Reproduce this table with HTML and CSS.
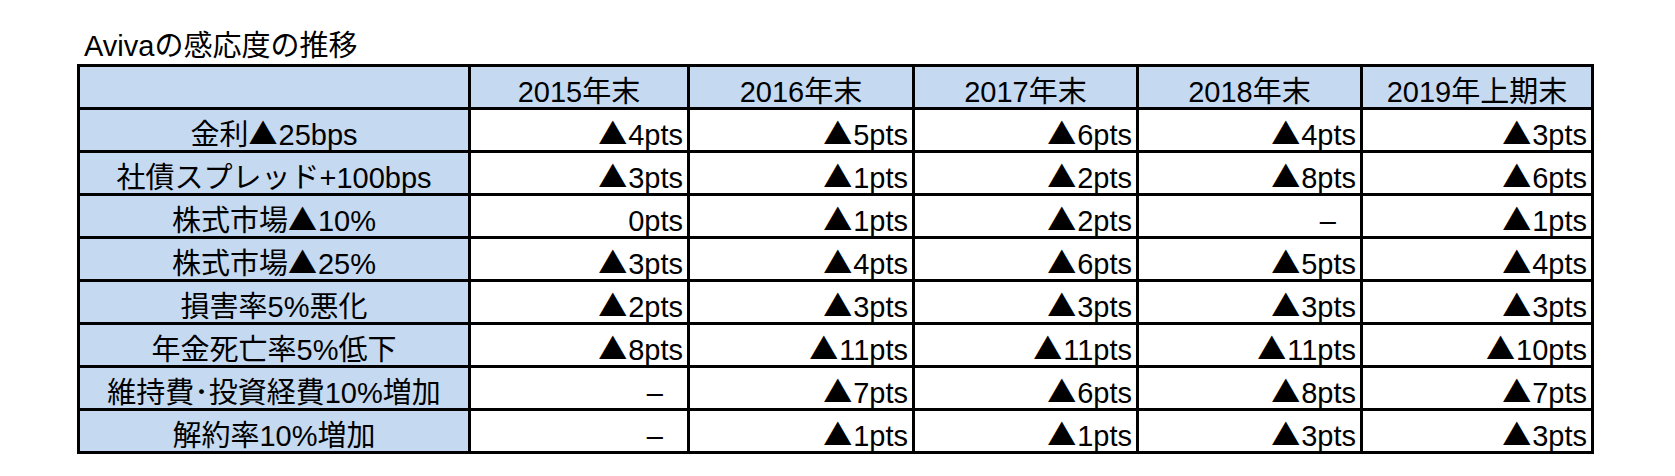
FILE: index.html
```html
<!DOCTYPE html>
<html lang="ja">
<head>
<meta charset="utf-8">
<title>Avivaの感応度の推移</title>
<link rel="stylesheet" href="styles.css">
</head>
<body>
<div class="page">
  <div class="title">Avivaの感応度の推移</div>
  <table class="grid">
    <colgroup>
      <col class="c-label">
      <col class="c-2015">
      <col class="c-2016">
      <col class="c-2017">
      <col class="c-2018">
      <col class="c-2019">
    </colgroup>
    <thead>
      <tr>
        <th class="corner"></th>
        <th>2015年末</th>
        <th>2016年末</th>
        <th>2017年末</th>
        <th>2018年末</th>
        <th>2019年上期末</th>
      </tr>
    </thead>
    <tbody>
      <tr>
        <th>金利<span class="tri">▲</span>25bps</th>
        <td><span class="tri">▲</span>4pts</td>
        <td><span class="tri">▲</span>5pts</td>
        <td><span class="tri">▲</span>6pts</td>
        <td><span class="tri">▲</span>4pts</td>
        <td><span class="tri">▲</span>3pts</td>
      </tr>
      <tr>
        <th>社債スプレッド+100bps</th>
        <td><span class="tri">▲</span>3pts</td>
        <td><span class="tri">▲</span>1pts</td>
        <td><span class="tri">▲</span>2pts</td>
        <td><span class="tri">▲</span>8pts</td>
        <td><span class="tri">▲</span>6pts</td>
      </tr>
      <tr>
        <th>株式市場<span class="tri">▲</span>10%</th>
        <td>0pts</td>
        <td><span class="tri">▲</span>1pts</td>
        <td><span class="tri">▲</span>2pts</td>
        <td class="dash">–</td>
        <td><span class="tri">▲</span>1pts</td>
      </tr>
      <tr>
        <th>株式市場<span class="tri">▲</span>25%</th>
        <td><span class="tri">▲</span>3pts</td>
        <td><span class="tri">▲</span>4pts</td>
        <td><span class="tri">▲</span>6pts</td>
        <td><span class="tri">▲</span>5pts</td>
        <td><span class="tri">▲</span>4pts</td>
      </tr>
      <tr>
        <th>損害率5%悪化</th>
        <td><span class="tri">▲</span>2pts</td>
        <td><span class="tri">▲</span>3pts</td>
        <td><span class="tri">▲</span>3pts</td>
        <td><span class="tri">▲</span>3pts</td>
        <td><span class="tri">▲</span>3pts</td>
      </tr>
      <tr>
        <th>年金死亡率5%低下</th>
        <td><span class="tri">▲</span>8pts</td>
        <td><span class="tri">▲</span>11pts</td>
        <td><span class="tri">▲</span>11pts</td>
        <td><span class="tri">▲</span>11pts</td>
        <td><span class="tri">▲</span>10pts</td>
      </tr>
      <tr>
        <th>維持費<span class="mid">･</span>投資経費10%増加</th>
        <td class="dash">–</td>
        <td><span class="tri">▲</span>7pts</td>
        <td><span class="tri">▲</span>6pts</td>
        <td><span class="tri">▲</span>8pts</td>
        <td><span class="tri">▲</span>7pts</td>
      </tr>
      <tr>
        <th>解約率10%増加</th>
        <td class="dash">–</td>
        <td><span class="tri">▲</span>1pts</td>
        <td><span class="tri">▲</span>1pts</td>
        <td><span class="tri">▲</span>3pts</td>
        <td><span class="tri">▲</span>3pts</td>
      </tr>
    </tbody>
  </table>
</div>
</body>
</html>
```

FILE: styles.css
```css
html, body {
  margin: 0;
  padding: 0;
  background: #ffffff;
}

body {
  font-family: "Liberation Sans Narrow", "Liberation Sans", "Noto Sans CJK JP", sans-serif;
  color: #000000;
}

.page {
  padding: 30px 0 0 77px;
}

.title {
  font-size: 29px;
  line-height: 32px;
  height: 32px;
  padding-left: 7px;
  margin-bottom: 2px;
  white-space: nowrap;
}

.grid {
  table-layout: fixed;
  width: 1517px;
  border-collapse: separate;
  border-spacing: 3px;
  background: #000000;
}

.c-label { width: 388px; }
.c-2015 { width: 216px; }
.c-2016 { width: 222px; }
.c-2017 { width: 221px; }
.c-2018 { width: 221px; }
.c-2019 { width: 228px; }

.grid tr {
  height: 40px;
}

.grid th,
.grid td {
  height: 40px;
  padding: 0;
  font-size: 29px;
  line-height: 30px;
  font-weight: normal;
  vertical-align: bottom;
  white-space: nowrap;
}

.grid th {
  background: #c5d9f1;
  text-align: center;
}

.grid td {
  background: #ffffff;
  text-align: right;
  padding-right: 4px;
}

.grid td.dash {
  padding-right: 24px;
}

.tri {
  font-family: "Noto Sans CJK JP", sans-serif;
  margin-right: 1px;
}

.mid {
  font-family: "Noto Sans CJK JP", sans-serif;
}
```
